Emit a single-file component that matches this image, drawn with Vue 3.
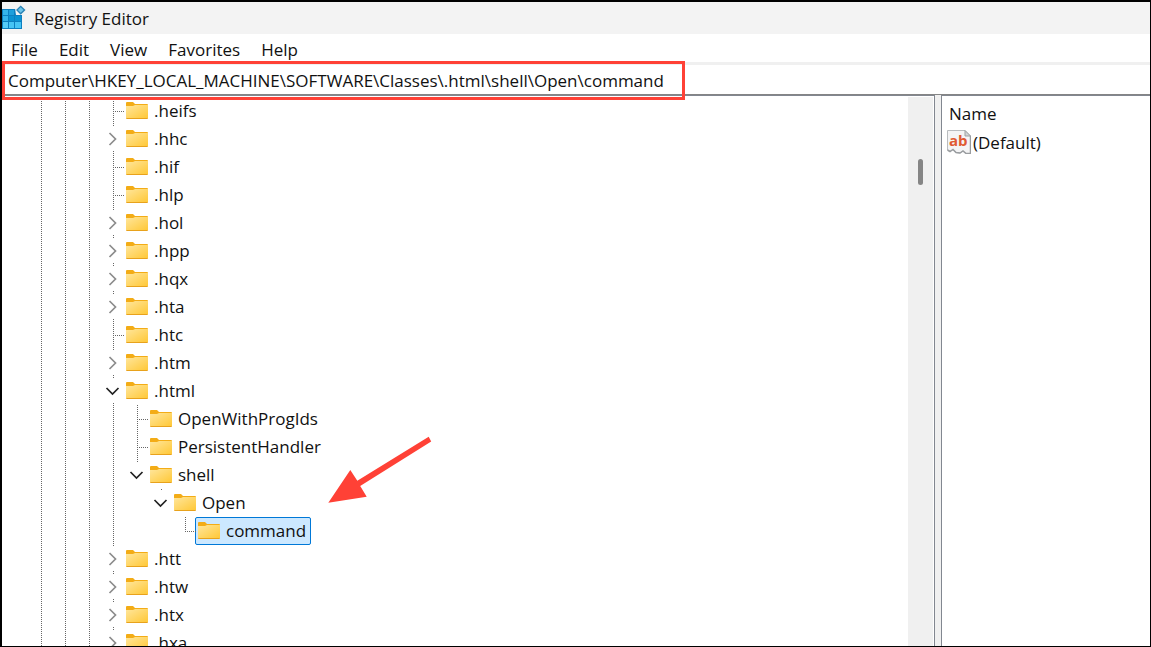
<script setup>
import { ref } from 'vue'

const menus = ['File', 'Edit', 'View', 'Favorites', 'Help']
const address = ref('Computer\\HKEY_LOCAL_MACHINE\\SOFTWARE\\Classes\\.html\\shell\\Open\\command')
const selected = ref('command')

const leaf = (name) => ({ name, cells: ['tee'] })
const closed = (name) => ({ name, cells: ['closed'] })

const rows = [
  leaf('.heifs'),
  closed('.hhc'),
  leaf('.hif'),
  leaf('.hlp'),
  closed('.hol'),
  closed('.hpp'),
  closed('.hqx'),
  closed('.hta'),
  leaf('.htc'),
  closed('.htm'),
  { name: '.html', cells: ['open'] },
  { name: 'OpenWithProgIds', cells: ['line', 'tee'] },
  { name: 'PersistentHandler', cells: ['line', 'tee'] },
  { name: 'shell', cells: ['line', 'open last'] },
  { name: 'Open', cells: ['line', 'none', 'open last'] },
  { name: 'command', cells: ['line', 'none', 'none', 'elbow'] },
  closed('.htt'),
  closed('.htw'),
  closed('.htx'),
  closed('.hxa'),
]

const isExpander = (cell) => cell.startsWith('open') || cell.startsWith('closed')
</script>

<template>
  <div class="window">
    <header class="titlebar">
      <svg class="app-icon" viewBox="0 0 24 24" aria-hidden="true">
        <rect x="0" y="3" width="20" height="20" fill="#0c7fc0" />
        <g fill="#35b4ea">
          <rect x="1" y="4" width="5" height="5" />
          <rect x="7" y="4" width="5" height="5" fill="#1d9fdc" />
          <rect x="1" y="10" width="5" height="5" />
          <rect x="7" y="10" width="5" height="5" fill="#0a92d2" />
          <rect x="13" y="10" width="6" height="5" fill="#0a92d2" />
          <rect x="1" y="16" width="5" height="6" fill="#55ccf8" />
          <rect x="7" y="16" width="5" height="6" fill="#45c4f5" />
          <rect x="13" y="16" width="6" height="6" fill="#45c4f5" />
        </g>
        <path d="M13 2H22V9H14Z" fill="#f3f3f3" />
        <path d="M18.700 -.5L23.500 4L18.700 8.700L14 4Z" fill="#2a83b5" />
        <path d="M18.700 1.200L21.500 4L18.700 6.800L15.900 4Z" fill="#6cc4ea" />
      </svg>
      <h1 class="title">Registry Editor</h1>
    </header>

    <nav class="menubar">
      <button v-for="m in menus" :key="m" class="menu" type="button">{{ m }}</button>
    </nav>

    <div class="addressbar">
      <input v-model="address" class="address" type="text" aria-label="Key path" spellcheck="false" />
      <span class="highlight"></span>
    </div>

    <main class="panes">
      <section class="tree-pane">
        <ul class="tree" role="tree" aria-label="Registry keys">
          <li v-for="row in rows" :key="row.name" class="row" role="treeitem" :aria-selected="row.name === selected">
            <span v-for="n in 3" :key="'g' + n" class="cell line"></span>
            <template v-for="(cell, i) in row.cells" :key="i">
              <button v-if="isExpander(cell)" class="cell expander" :class="cell" type="button" :aria-label="'Toggle ' + row.name">
                <svg v-if="cell === 'closed'" class="chevron" viewBox="0 0 24 28">
                  <path d="M7.500 8L13.500 14L7.500 20" fill="none" stroke="#8c8c8c" stroke-width="1.700" />
                </svg>
                <svg v-else class="chevron" viewBox="0 0 24 28">
                  <path d="M4.500 11L10.500 17L16.500 11" fill="none" stroke="#222" stroke-width="1.700" />
                </svg>
              </button>
              <span v-else class="cell" :class="cell"></span>
            </template>
            <button class="key" :class="{ selected: row.name === selected }" type="button" @click="selected = row.name">
              <svg class="folder" viewBox="0 0 22 17" aria-hidden="true">
                <path d="M0 1Q0 0 1 0H7L9 2H21Q22 2 22 3V6H0Z" fill="#f3ac16" />
                <path d="M0 4H7L9 3H22V16H0Z" fill="url(#folder-fill)" />
                <path d="M0 16H22Q22 17 21 17H1Q0 17 0 16Z" fill="#e8a21c" />
              </svg>
              <span>{{ row.name }}</span>
            </button>
          </li>
        </ul>
        <div class="scrollbar"><div class="thumb"></div></div>

        <svg class="arrow" viewBox="0 0 104 68" aria-hidden="true">
          <path d="M0.300 66.700L22.300 34L29.300 44.800L100.700 0.700L103.200 5.500L32.200 50L38.700 60.700Z" fill="#ff4136" />
        </svg>
      </section>

      <div class="splitter"></div>

      <section class="values-pane">
        <table class="values">
          <thead>
            <tr><th scope="col">Name</th></tr>
          </thead>
          <tbody>
            <tr>
              <td>
                <div class="value">
                  <svg class="string-icon" viewBox="0 0 24 24" aria-hidden="true">
                    <path d="M.5 .5H18L23.500 6V23.500H19L16 21L13 23L9 22.500L6 19.500L3 21.500L.5 20Z" fill="#f4f4f5" stroke="#b9bcbf" />
                    <path d="M18 .5V6H23.500Z" fill="#d2d5d8" stroke="#9da0a3" />
                    <path d="M23.500 6V23.500H19L16 21L13 23L9 22.500L6 19.500L3 21.500L.5 20" fill="none" stroke="#9a9da0" stroke-width="1.500" />
                    <text x="2" y="16" class="ab">ab</text>
                  </svg>
                  <span>(Default)</span>
                </div>
              </td>
            </tr>
          </tbody>
        </table>
      </section>
    </main>

    <svg class="defs" width="0" height="0" aria-hidden="true">
      <defs>
        <linearGradient id="folder-fill" x1="0" y1="0" x2="1" y2="1">
          <stop offset="0" stop-color="#ffe69c" />
          <stop offset="1" stop-color="#ffc837" />
        </linearGradient>
      </defs>
    </svg>
  </div>
</template>

<style>
html,
body,
#app {
  height: 100%;
}
body {
  margin: 0;
  overflow: hidden;
}
</style>

<style scoped>
.window {
  box-sizing: border-box;
  height: 100%;
  display: flex;
  flex-direction: column;
  border: 1px solid #000;
  border-width: 2px 1px 1px 2px;
  background: #fff;
  color: #111;
  font-family: "Open Sans", "Noto Sans", sans-serif;
  font-size: 17px;
  overflow: hidden;
}
button,
input {
  font: inherit;
  color: inherit;
  background: none;
  border: 0;
  padding: 0;
  margin: 0;
  outline: 0;
}
.titlebar {
  flex: none;
  display: flex;
  align-items: center;
  gap: 8px;
  height: 32px;
  background: #f3f3f3;
}
.app-icon {
  width: 24px;
  height: 24px;
  overflow: visible;
}
.title {
  margin: 0;
  font-size: 17px;
  font-weight: 400;
}
.menubar {
  flex: none;
  display: flex;
  gap: 21px;
  height: 28px;
  padding-left: 9px;
  padding-top: 2px;
  box-sizing: border-box;
}
.addressbar {
  flex: none;
  position: relative;
  display: flex;
  height: 33px;
  box-sizing: border-box;
  border-top: 3px solid #f0f0f0;
  border-bottom: 1px solid #858585;
}
.address {
  flex: 1;
  min-width: 0;
  padding-left: 6px;
  padding-top: 2px;
}
.highlight {
  position: absolute;
  left: 0;
  top: -4px;
  width: 683px;
  height: 39px;
  box-sizing: border-box;
  border: 3px solid #ff4136;
  pointer-events: none;
  z-index: 2;
}
.panes {
  flex: 1;
  min-height: 0;
  display: flex;
}
.tree-pane {
  flex: 1;
  min-width: 0;
  position: relative;
  display: flex;
  border-top: 1px solid #828790;
  border-right: 1px solid #828790;
  padding: 1px 1px 0 0;
}
.tree {
  flex: 1;
  min-width: 0;
  height: 100%;
  margin: 0;
  padding: 0 0 0 28px;
  box-sizing: border-box;
  list-style: none;
  overflow: hidden;
}
.row {
  display: flex;
  height: 28px;
}
.cell {
  position: relative;
  flex: none;
  width: 24px;
  height: 28px;
}
.line::before,
.tee::before,
.elbow::before,
.expander::before {
  content: "";
  position: absolute;
  left: 11px;
  top: 0;
  width: 1px;
  height: 28px;
  background: repeating-linear-gradient(#666 0 1px, transparent 1px 2px);
}
.elbow::before {
  height: 14px;
}
.expander::before {
  height: 1px;
}
.tee::after,
.elbow::after {
  content: "";
  position: absolute;
  left: 11px;
  top: 14px;
  width: 12px;
  height: 1px;
  background: repeating-linear-gradient(90deg, #666 0 1px, transparent 1px 2px);
}
.expander::after {
  content: "";
  position: absolute;
  left: 11px;
  top: 26px;
  width: 1px;
  height: 1px;
  background: #666;
}
.last::after {
  display: none;
}
.chevron {
  display: block;
  width: 24px;
  height: 28px;
}
.key {
  display: flex;
  align-items: center;
  gap: 6px;
  height: 28px;
  box-sizing: border-box;
  margin-left: -3px;
  padding: 0 4px 1px 2px;
  border: 1px solid transparent;
  border-radius: 2px;
  white-space: nowrap;
}
.selected {
  background: #cce8ff;
  border-color: #0078d7;
}
.folder {
  flex: none;
  width: 22px;
  height: 17px;
}
.scrollbar {
  flex: none;
  width: 25px;
  background: #f0f0f0;
}
.thumb {
  width: 5px;
  height: 26px;
  margin: 62px 0 0 10px;
  border-radius: 3px;
  background: #858585;
}
.arrow {
  position: absolute;
  left: 326px;
  top: 340px;
  width: 104px;
  height: 68px;
}
.splitter {
  flex: none;
  width: 6px;
  background: #f0f0f0;
}
.values-pane {
  flex: none;
  width: 208px;
  border-top: 1px solid #828790;
  border-left: 1px solid #828790;
}
.values {
  border-collapse: collapse;
}
.values th {
  height: 34px;
  padding: 0 0 0 7px;
  text-align: left;
  font-weight: 400;
}
.values td {
  padding: 0 0 0 5px;
}
.value {
  display: flex;
  align-items: center;
  gap: 2px;
}
.string-icon {
  width: 24px;
  height: 24px;
}
.ab {
  font: 700 15px "Open Sans", sans-serif;
  fill: #e05a33;
}
.defs {
  position: absolute;
}
</style>
